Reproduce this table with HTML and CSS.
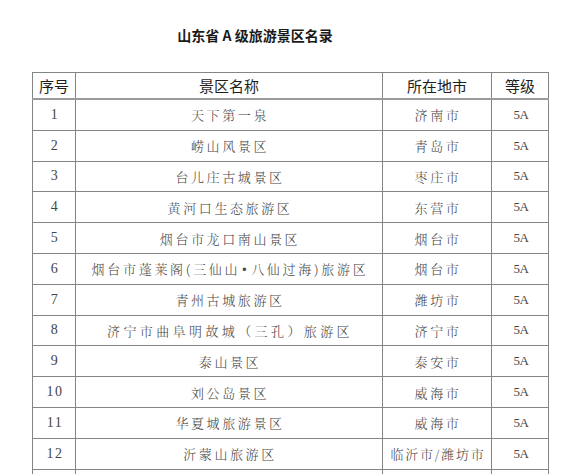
FILE: index.html
```html
<!DOCTYPE html>
<html lang="zh-CN">
<head>
<meta charset="utf-8">
<title>山东省A级旅游景区名录</title>
<link rel="stylesheet" href="styles.css">
</head>
<body>
<div class="page">
  <h1 class="title">山东省 A 级旅游景区名录</h1>
  <table class="list">
    <colgroup>
      <col class="c-no"><col class="c-name"><col class="c-city"><col class="c-level">
    </colgroup>
    <thead>
      <tr><th>序号</th><th>景区名称</th><th>所在地市</th><th>等级</th></tr>
    </thead>
    <tbody>
      <tr><td class="num">1</td><td>天下第一泉</td><td>济南市</td><td class="lv">5A</td></tr>
      <tr><td class="num">2</td><td>崂山风景区</td><td>青岛市</td><td class="lv">5A</td></tr>
      <tr><td class="num">3</td><td>台儿庄古城景区</td><td>枣庄市</td><td class="lv">5A</td></tr>
      <tr><td class="num">4</td><td>黄河口生态旅游区</td><td>东营市</td><td class="lv">5A</td></tr>
      <tr><td class="num">5</td><td>烟台市龙口南山景区</td><td>烟台市</td><td class="lv">5A</td></tr>
      <tr><td class="num">6</td><td class="wide">烟台市蓬莱阁(三仙山<span class="dot">•</span>八仙过海)旅游区</td><td>烟台市</td><td class="lv">5A</td></tr>
      <tr><td class="num">7</td><td>青州古城旅游区</td><td>潍坊市</td><td class="lv">5A</td></tr>
      <tr><td class="num">8</td><td class="wider">济宁市曲阜明故城（三孔）旅游区</td><td>济宁市</td><td class="lv">5A</td></tr>
      <tr><td class="num">9</td><td>泰山景区</td><td>泰安市</td><td class="lv">5A</td></tr>
      <tr><td class="num">10</td><td>刘公岛景区</td><td>威海市</td><td class="lv">5A</td></tr>
      <tr><td class="num">11</td><td>华夏城旅游景区</td><td>威海市</td><td class="lv">5A</td></tr>
      <tr><td class="num">12</td><td>沂蒙山旅游区</td><td class="tight">临沂市/潍坊市</td><td class="lv">5A</td></tr>
      <tr class="empty"><td></td><td></td><td></td><td></td></tr>
    </tbody>
  </table>
</div>
</body>
</html>
```

FILE: styles.css
```css
html, body {
  margin: 0;
  padding: 0;
  background: #ffffff;
}

.page {
  padding: 25px 0 0 32px;
}

.title {
  width: 446px;
  margin: 0 0 27px 0;
  height: 20px;
  line-height: 20px;
  text-align: center;
  font-family: "Noto Sans CJK SC", "Liberation Sans", sans-serif;
  font-size: 14px;
  font-weight: 700;
  color: #1a1a1a;
}

.list {
  border-collapse: collapse;
  table-layout: fixed;
  width: 516px;
  border: 1px solid #707070;
}

.c-no { width: 43px; }
.c-name { width: 307px; }
.c-city { width: 109px; }
.c-level { width: 57px; }

.list th,
.list td {
  border: 1px solid #858585;
  padding: 0;
  text-align: center;
  vertical-align: middle;
  white-space: nowrap;
  overflow: hidden;
}

.list th {
  height: 25px;
  font-family: "Noto Sans CJK SC", "Liberation Sans", sans-serif;
  font-size: 15px;
  font-weight: 400;
  color: #1e1e1e;
  border-bottom: 2px solid #9a9a9a;
}

.list td {
  height: 29.8px;
  font-family: "Noto Serif CJK SC", "Liberation Serif", "Noto Sans CJK SC", serif;
  font-size: 13px;
  font-weight: 300;
  color: #454545;
  letter-spacing: 2.6px;
  padding-left: 2px;
}

.list td.wide {
  letter-spacing: 2.7px;
}

.list td.wide .dot {
  font-family: "Liberation Sans", sans-serif;
  font-size: 12px;
  margin: 0 2px;
}

.list td.wider {
  letter-spacing: 3.4px;
}

.list td.tight {
  letter-spacing: 1.8px;
}

.list td.num {
  font-family: "Liberation Serif", serif;
  font-size: 14px;
  font-weight: 400;
  letter-spacing: 1.5px;
}

.list td.lv {
  font-family: "Liberation Serif", serif;
  font-size: 13px;
  font-weight: 400;
  letter-spacing: -0.5px;
}
```
